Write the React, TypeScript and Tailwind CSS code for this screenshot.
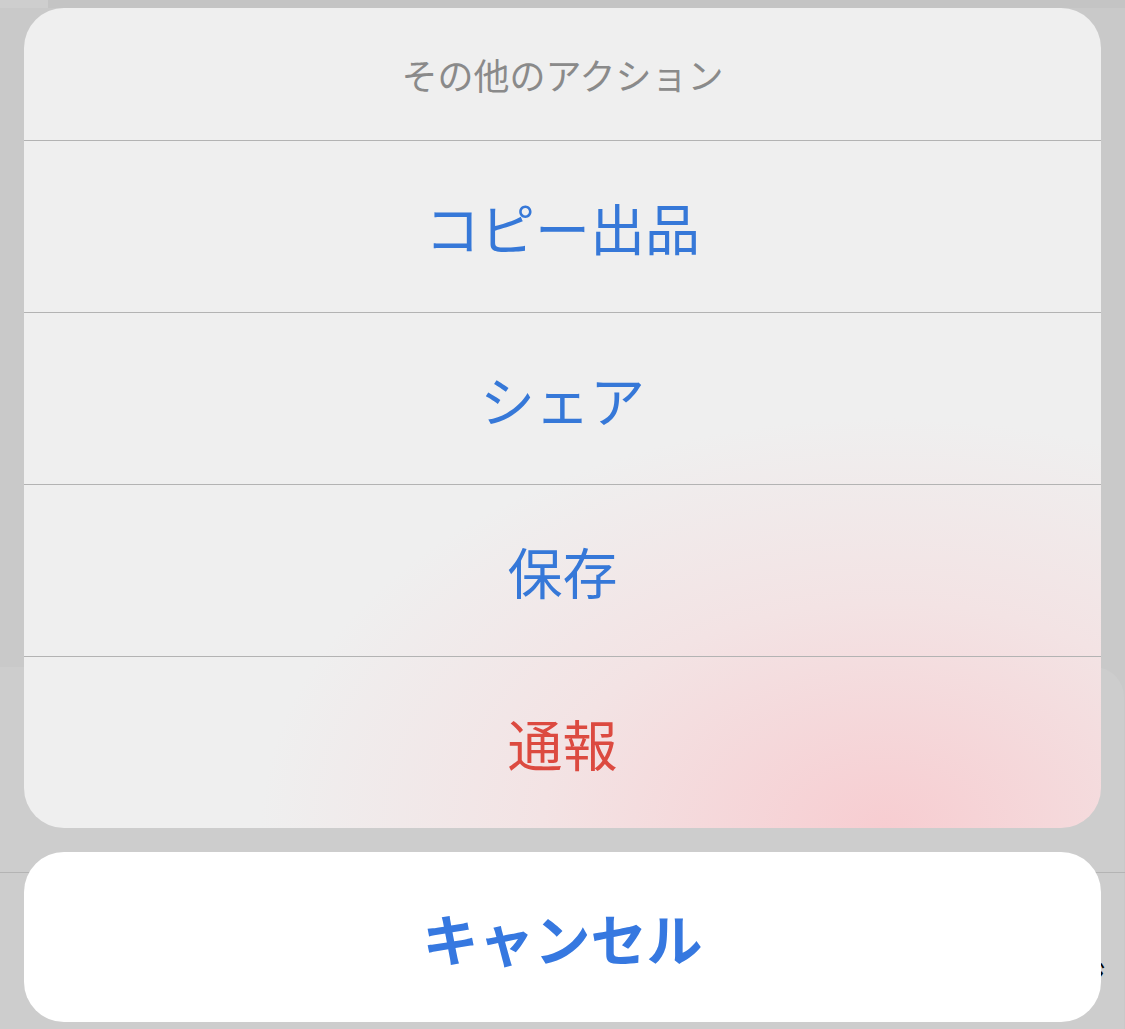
import React from "react";

interface SheetAction {
  id: number;
  label: string;
  danger?: boolean;
}

const actions: SheetAction[] = [
  { id: 1, label: "コピー出品" },
  { id: 2, label: "シェア" },
  { id: 3, label: "保存" },
  { id: 4, label: "通報", danger: true },
];

export default function App() {
  return (
    <div
      className="relative h-[1029px] w-[1125px] overflow-hidden bg-[#c9c9c9]"
      style={{ fontFamily: '"Noto Sans CJK JP", "Noto Sans", sans-serif' }}
    >
      {/* dimmed page behind the sheet */}
      <div className="absolute left-0 top-0 h-[8px] w-[1125px] bg-[#c4c4c4]" />
      <div className="absolute left-0 top-0 h-[8px] w-[48px] bg-[#cecece]" />
      <div className="absolute left-[-30px] top-[667px] h-[400px] w-[1154px] rounded-[30px] bg-[#cdcdcd]" />
      <div className="absolute left-0 top-[872px] h-px w-[1125px] bg-[#b4b4b4]" />
      <span className="absolute left-[1076px] top-[958px] text-[30px] leading-none text-black">ジ</span>

      {/* action sheet */}
      <div className="relative flex flex-col px-[24px] pt-[8px]">
        <div className="overflow-hidden rounded-[40px] bg-[radial-gradient(ellipse_58%_50%_at_80%_100%,#f7cdd1_0%,#f3e3e4_55%,#efefef_100%)]">
          <div className="flex h-[132px] items-center justify-center text-[36px] leading-none text-[#8a8a8a]">
            その他のアクション
          </div>
          {actions.map((item) => (
            <div
              key={item.id}
              className={`flex h-[172px] items-center justify-center border-t border-[#b3b3b3] text-[55px] leading-none ${
                item.danger ? "text-[#dc4a40]" : "text-[#3678d8]"
              }`}
            >
              {item.label}
            </div>
          ))}
        </div>

        <button className="mt-[24px] flex h-[170px] items-center justify-center rounded-[40px] bg-white text-[56px] font-bold leading-none text-[#3678e0]">
          キャンセル
        </button>
      </div>
    </div>
  );
}
